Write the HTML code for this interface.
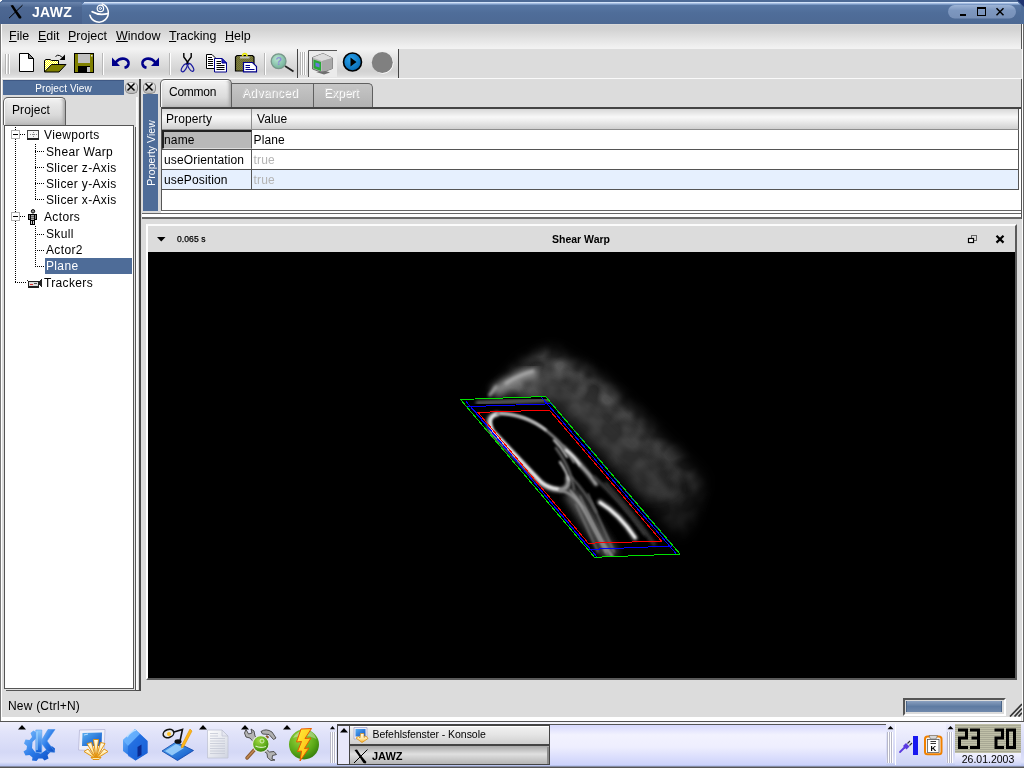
<!DOCTYPE html>
<html><head><meta charset="utf-8"><title>JAWZ</title>
<style>
*{box-sizing:border-box;margin:0;padding:0}
html,body{width:1024px;height:768px;overflow:hidden;background:#dcdcdc;font-family:"Liberation Sans",sans-serif;font-size:12px;color:#000}
.abs{position:absolute}
body{-webkit-font-smoothing:antialiased}
#root{position:absolute;left:0;top:0;width:1024px;height:768px;will-change:transform}
#titletxt{left:32px;top:4px;font-weight:bold;font-size:14px;color:#fff;letter-spacing:0.3px}
#menubar{left:2px;top:24px;width:1019px;height:25px;background:linear-gradient(#e2e2e2 0,#d2d2d2 1px,#d4d4d4 6px,#f2f2f2 24px)}
.mi{position:absolute;top:5px;font-size:12.5px;line-height:14px}
.mi u{text-decoration:underline}
#toolbar{left:2px;top:49px;width:1020px;height:29px;background:#dcdcdc}
#tbgrad{left:2px;top:49px;width:295px;height:29px;background:linear-gradient(#f3f3f3,#e4e4e4 9px,#d2d2d2 22px,#dadada 26px,#e8e8e8)}
#tbgrad2{left:298px;top:49px;width:100px;height:29px;background:linear-gradient(#f3f3f3,#e4e4e4 9px,#d2d2d2 22px,#dadada 26px,#e8e8e8)}
#tbline{left:2px;top:78px;width:1019px;height:1px;background:#fafafa}
#pvhead{left:3px;top:80px;width:121px;height:15px;border-top:1px solid #3f5985;background:#4e6c98;color:#fff;font-size:10px;text-align:center;line-height:15px;letter-spacing:0.1px}
#ptab{left:3px;top:97px;width:63px;height:28px;border:1px solid #5e5e5e;border-bottom:none;border-radius:5px 5px 0 0;background:linear-gradient(#f4f4f4,#e8e8e8 6px,#dadada 17px,#c6c6c6 24px,#b8b8b8 27px);font-size:12px;line-height:24px;padding-left:8px;letter-spacing:0.1px;box-shadow:inset 1px 1px 1px #fff,inset -3px 0 3px -1px #a8a8a8,inset 3px 0 3px -2px #c8c8c8}
#tree{left:4px;top:125px;width:130px;height:564px;background:#fff;border:1px solid #555;box-shadow:1px 1px 0 #e4e4e4,2px 2px 0 #555}
.ti{position:absolute;font-size:12px;line-height:16px;white-space:nowrap;letter-spacing:0.35px}
#vsplit{left:136px;top:97px;width:3px;height:593px;background:linear-gradient(90deg,#fff,#f4f4f4 60%,#c8c8c8)}
#vsplit2{left:139px;top:79px;width:2px;height:612px;background:#4a4a4a}
#vsplit3{left:140px;top:79px;width:2px;height:611px;background:#f0f0f0}
#propstrip{left:143px;top:94px;width:15px;height:117px;background:#4e6c98}
#propstrip span{position:absolute;left:-26.500px;top:52px;width:68px;height:14px;line-height:14px;transform:rotate(-90deg);color:#fff;font-size:10.5px;white-space:nowrap;text-align:center;letter-spacing:0.03px}
.tab{position:absolute;font-size:12px}
#tabc{left:160px;top:79px;width:72px;height:28px;border:1px solid #5e5e5e;border-bottom:none;border-radius:5px 5px 0 0;background:linear-gradient(#f6f6f6,#eaeaea 6px,#dcdcdc 17px,#c8c8c8 24px,#bababa 27px);padding:5px 0 0 8px;z-index:2;box-shadow:inset 1px 1px 1px #fff,inset -3px 0 3px -1px #a8a8a8,inset 3px 0 3px -2px #c8c8c8;letter-spacing:-0.25px}
#taba{left:232px;top:83px;width:82px;height:24px;border:1px solid #606060;border-left:none;border-bottom:none;letter-spacing:0.35px;background:linear-gradient(#c6c6c6,#b2b2b2);padding:2px 0 0 10px;color:#cdcdcd;text-shadow:1px 1px 0 #fff}
#tabe{left:313px;top:83px;width:60px;height:24px;border:1px solid #606060;border-bottom:none;border-top-right-radius:5px;background:linear-gradient(#c6c6c6,#b2b2b2);padding:2px 0 0 10px;color:#cdcdcd;text-shadow:1px 1px 0 #fff}
#table{left:161px;top:107px;width:860px;height:104px;background:#fff;border:1px solid #555;border-top:2px solid #444;border-right:none;border-bottom-color:#666;box-shadow:0 2px 0 #fff}
.th{position:absolute;top:0;height:21px;background:linear-gradient(#d8d8d8,#f8f8f8 40%,#f0f0f0 55%,#d0d0d0);border-right:1px solid #8c8c8c;border-bottom:1px solid #8c8c8c;line-height:20px;font-size:12px;padding-left:5px;letter-spacing:0.1px}
.tr{position:absolute;left:0;width:857px;border-right:1px solid #555;height:20px;border-bottom:1px solid #555;font-size:12px;line-height:20px;letter-spacing:0.15px}
.tr .c1{position:absolute;left:0;top:0;width:90px;height:19px;border-right:1px solid #555;padding-left:2px}
.tr .c2{position:absolute;left:91.5px;top:0}
#hsplit{left:142px;top:213px;width:880px;height:6px;border-top:1px solid #666;border-bottom:2px solid #666;border-bottom-color:#6a6a6a;background:#fff}
#vp{left:146px;top:224px;width:871px;height:456px;border:2px solid #fff;border-top-color:#fbfbfb;border-right-color:#5a5a5a;border-bottom-color:#5a5a5a}
#vpblack{left:148px;top:252px;width:867px;height:426px;background:#000}
#status{left:8px;top:699px;font-size:12px;line-height:14px;letter-spacing:0.2px}
#prog{left:903px;top:698px;width:103px;height:18px;border:2px solid #555;border-right:2px solid #fff;border-bottom:2px solid #fff;background:#dcdcdc;padding:1px 2px 2px 1px}
#prog div{width:100%;height:100%;background:linear-gradient(#8aa0c0,#5e7ba2 50%,#6f88ab);box-shadow:inset 1px 0 0 #4a6588,inset -1px 0 0 #4a6588}
#taskbar{left:0;top:722px;width:1024px;height:46px;background:linear-gradient(#eeeefc,#e2e4fa 10px,#d4d8f6 30px,#dfe2fa 40px,#b4c0ee 44px,#555 45px)}
.xbtn{position:absolute;width:13px;height:12px;margin-top:1px;border-radius:5px;background:linear-gradient(#f4f4f4,#b8b8b8);border:1px solid #8a8a8a;border-top-color:#aaa}
</style></head>
<body>
<div id="root">
<div class="abs" id="menubar">
 <span class="mi" style="left:7px"><u>F</u>ile</span>
 <span class="mi" style="left:36px"><u>E</u>dit</span>
 <span class="mi" style="left:66px"><u>P</u>roject</span>
 <span class="mi" style="left:114px"><u>W</u>indow</span>
 <span class="mi" style="left:167px"><u>T</u>racking</span>
 <span class="mi" style="left:223px"><u>H</u>elp</span>
</div>
<div class="abs" id="toolbar"></div>
<div class="abs" id="tbgrad"></div>
<div class="abs" id="tbgrad2"></div>
<div class="abs" id="tbline"></div>


<svg class="abs" style="left:0;top:0" width="1024" height="80" viewBox="0 0 1024 80" shape-rendering="auto">
 <defs>
  <linearGradient id="gtab" x1="0" y1="0" x2="0" y2="1"><stop offset="0" stop-color="#6b85ad"/><stop offset="0.25" stop-color="#4d6893"/><stop offset="1" stop-color="#47618c"/></linearGradient>
  <linearGradient id="gtitle" x1="0" y1="0" x2="0" y2="1"><stop offset="0" stop-color="#5b7aa8"/><stop offset="0.5" stop-color="#4f6d99"/><stop offset="1" stop-color="#4d6994"/></linearGradient>
  <linearGradient id="gpill" x1="0" y1="0" x2="0" y2="1"><stop offset="0" stop-color="#9db4d6"/><stop offset="0.4" stop-color="#7d97bf"/><stop offset="1" stop-color="#7790b8"/></linearGradient>
  <radialGradient id="gplay" cx="0.4" cy="0.35" r="0.7"><stop offset="0" stop-color="#2aa4ee"/><stop offset="1" stop-color="#0566b0"/></radialGradient>
  <radialGradient id="gmag" cx="0.4" cy="0.35" r="0.7"><stop offset="0" stop-color="#b8e6d0"/><stop offset="1" stop-color="#6fae96"/></radialGradient>
  <pattern id="dith" width="2" height="2" patternUnits="userSpaceOnUse"><rect width="2" height="2" fill="#ffff00"/><rect width="1" height="1" fill="#fff"/><rect x="1" y="1" width="1" height="1" fill="#fff"/></pattern>
  <pattern id="dith2" width="2" height="2" patternUnits="userSpaceOnUse"><rect width="2" height="2" fill="#808040"/><rect width="1" height="1" fill="#6c6c30"/><rect x="1" y="1" width="1" height="1" fill="#6c6c30"/></pattern>
 </defs>
 <!-- title bar -->
 <rect x="0" y="0" width="1024" height="24" fill="#4f6d99"/>
 <rect x="0" y="0" width="1024" height="2" fill="#4d6a96"/>
 <rect x="82" y="2" width="939" height="22" fill="url(#gtitle)"/>
 <rect x="84" y="2" width="934" height="1" fill="#d2e2f8"/><rect x="83" y="3" width="936" height="1" fill="#a4bce0"/><rect x="82" y="4" width="938" height="1" fill="#7a98c4"/>
 <path d="M0 24V5Q0 2 3 2H80Q82 2 82 4V24Z" fill="url(#gtab)"/>
 <rect x="0" y="0" width="2" height="1" fill="#fff"/><rect x="0" y="1" width="1" height="1" fill="#dfe6f0"/>
 <path d="M1017 0H1024V7Z" fill="#1f3470"/>
 <!-- X logo -->
 <path d="M10.5 5.5L13 5L17 11L21.5 17L21 18.5L19 18.5L15 12.5Z" fill="#000"/>
 <path d="M22.5 5.2L9 18.2" stroke="#000" stroke-width="1" fill="none"/>
 <!-- swirl logo -->
 <g fill="none" stroke="#fff" stroke-linecap="round">
  <path d="M102.200 3.900A9.400 9.400 0 1 1 89.900 15.300" stroke-width="1.500"/>
  <path d="M92.200 11.800Q99 15.800 107.800 13.600" stroke-width="1.900"/>
  <circle cx="100.400" cy="8.400" r="3.200" stroke-width="1.200"/>
  <circle cx="100.400" cy="8.400" r="1.100" stroke-width="0.900"/>
 </g>
 <!-- window buttons -->
 <rect x="948" y="5" width="68" height="13.5" rx="6.7" fill="url(#gpill)"/>
 <rect x="960" y="14" width="6" height="2" fill="#000"/>
 <rect x="977.5" y="7.5" width="8" height="8" fill="none" stroke="#000" stroke-width="1"/><rect x="977" y="7" width="9" height="2" fill="#000"/>
 <path d="M996.5 8.3L1003.5 15.2M1003.5 8.3L996.5 15.2" stroke="#000" stroke-width="1.5"/>
 <!-- toolbar handles -->
 <g shape-rendering="crispEdges">
  <rect x="5" y="54" width="1" height="20" fill="#b4b4b4"/><rect x="6" y="54" width="1" height="20" fill="#fff"/>
  <rect x="8" y="54" width="1" height="20" fill="#b4b4b4"/><rect x="9" y="54" width="1" height="20" fill="#fff"/>
  <rect x="102" y="53" width="1" height="22" fill="#b8b8b8"/><rect x="103" y="53" width="1" height="22" fill="#fff"/>
  <rect x="169" y="53" width="1" height="22" fill="#b8b8b8"/><rect x="170" y="53" width="1" height="22" fill="#fff"/>
  <rect x="264" y="53" width="1" height="22" fill="#b8b8b8"/><rect x="265" y="53" width="1" height="22" fill="#fff"/>
  <rect x="297" y="49" width="1" height="29" fill="#444"/>
  <rect x="398" y="49" width="1" height="29" fill="#444"/>
  <rect x="300" y="52" width="1" height="23" fill="#b4b4b4"/><rect x="301" y="52" width="1" height="23" fill="#fff"/>
  <rect x="302" y="52" width="1" height="23" fill="#b4b4b4"/><rect x="303" y="52" width="1" height="23" fill="#fff"/>
  <rect x="304" y="52" width="1" height="23" fill="#b4b4b4"/><rect x="305" y="52" width="1" height="23" fill="#fff"/>
 </g>
 <!-- new -->
 <path d="M19.5 53.5H28.5L33.5 58.5V71.5H19.5Z" fill="#fff" stroke="#000" stroke-width="1"/>
 <path d="M28.5 53.5V58.5H33.5Z" fill="#808080" stroke="#000" stroke-width="1" stroke-linejoin="round"/>
 <!-- open -->
 <path d="M44.5 72V60.5L46 59.5H50L51.5 60.5H58.5V64.5" fill="url(#dith)" stroke="#000" stroke-width="1"/>
 <path d="M44.5 72L51.5 64.5H66L59 72Z" fill="#808000" stroke="#000" stroke-width="1" stroke-linejoin="round"/>
 <path d="M55.5 56.5Q57.5 54.5 59.5 55.5T63 58" fill="none" stroke="#000" stroke-width="1"/>
 <path d="M65 54.5V60H59.5Z" fill="#000"/>
 <!-- save -->
 <rect x="74.500" y="53.5" width="19" height="19" fill="#808000" stroke="#000" stroke-width="1"/>
 <rect x="78" y="54" width="12" height="9" fill="#c0c0c0"/>
 <rect x="78" y="66" width="12" height="6" fill="#000"/>
 <rect x="87" y="67" width="3" height="5" fill="#c0c0c0"/>
 <rect x="91" y="55" width="1.500" height="1.500" fill="#e0e0e0"/>
 <!-- undo -->
 <path d="M112 57.500V66H120Z" fill="#00008b"/>
 <path d="M115.500 62.500Q119.500 57.800 124.500 58.800Q129 60.200 128.500 64Q128 67 124.500 67.800" fill="none" stroke="#00008b" stroke-width="2.600"/>
 <!-- redo -->
 <path d="M159 57.500V66H151Z" fill="#00008b"/>
 <path d="M155.500 62.500Q151.500 57.800 146.500 58.800Q142 60.200 142.500 64Q143 67 146.500 67.800" fill="none" stroke="#00008b" stroke-width="2.600"/>
 <!-- cut -->
 <path d="M183.800 53V57L187.500 62L191.200 57V53" fill="none" stroke="#000" stroke-width="1.400"/>
 <path d="M187.500 62L186 64.500M187.500 62L189 64.500" stroke="#000" stroke-width="1.400"/>
 <ellipse cx="184.200" cy="67.800" rx="2" ry="4.400" transform="rotate(32 184.200 67.800)" fill="none" stroke="#1a1aa0" stroke-width="1.200"/>
 <ellipse cx="190.800" cy="67.400" rx="2" ry="4.400" transform="rotate(-32 190.800 67.400)" fill="none" stroke="#1a1aa0" stroke-width="1.200"/>
 <!-- copy -->
 <path d="M206.500 54.500H212L215 57.500V68.500H206.500Z" fill="#fff" stroke="#000" stroke-width="1"/>
 <path d="M208 57.500H212M208 59.500H213M208 61.500H213M208 63.500H213M208 65.500H213" stroke="#000" stroke-width="1"/>
 <path d="M214.500 58.500H222L226.500 63V72H214.500Z" fill="#fff" stroke="#00008b" stroke-width="1"/>
 <path d="M222 58.500V63H226.500Z" fill="#2a2ad0" stroke="#00008b" stroke-width="1"/>
 <path d="M216.500 61.500H221M216.500 63.500H221M216.500 65.500H224.500M216.500 67.500H224.500M216.500 69.500H224.500" stroke="#000" stroke-width="1"/>
 <!-- paste -->
 <path d="M235.500 71V57L237 55.500H252.500L254 57V71Z" fill="url(#dith2)" stroke="#000" stroke-width="1.200"/>
 <path d="M242.500 56.500Q242.500 53.500 244.800 53.500Q247 53.500 247 56.500" fill="none" stroke="#e8e800" stroke-width="1.600"/>
 <rect x="240" y="56.500" width="9.500" height="2" fill="#c0c0c0"/>
 <path d="M243.500 62.500H252.500L256.500 66.500V71.800H243.500Z" fill="#fff" stroke="#00008b" stroke-width="1.200"/>
 <path d="M245.500 65.500H250M245.500 67.500H250M245.500 69.500H254.500" stroke="#00008b" stroke-width="1"/>
 <!-- find -->
 <path d="M285 66L293.500 71.500" stroke="#222" stroke-width="1.800"/>
 <circle cx="278.600" cy="61.200" r="7.400" fill="url(#gmag)" stroke="#78968a" stroke-width="1.300"/>
 <text x="275.500" y="65" font-family="Liberation Sans,sans-serif" font-size="11" font-weight="bold" fill="#8f8fd8">?</text>
 <!-- monitor button -->
 <rect x="308" y="50" width="29" height="27" fill="#ebebeb"/>
 <path d="M308.500 77V50.500H337" fill="none" stroke="#555" stroke-width="1"/>
 <path d="M312.500 57.500L323 53.500L332.500 58V68.500L322 72.500L312.500 69Z" fill="#b8b8b8" stroke="#555" stroke-width="0.800"/>
 <path d="M312.500 57.500L323 53.500L332.500 58L322 61Z" fill="#dcdcdc"/>
 <path d="M322 61L332.500 58V68.500L322 72.500Z" fill="#a8a8a8"/>
 <path d="M313.500 59.500L321 62V71L313.500 68.200Z" fill="#28a838"/>
 <path d="M315.500 62.500L319.500 63.800V67.500L315.500 66.200Z" fill="#6878e0"/>
 <path d="M316 72L324 74.500L330 72.500L326 71Z" fill="#707070"/>
 <!-- play -->
 <circle cx="352.500" cy="62" r="9" fill="url(#gplay)" stroke="#000" stroke-width="1.600"/>
 <path d="M350.500 57.500L356.500 62L350.500 66.500Z" fill="#000"/>
 <!-- stop -->
 <circle cx="383" cy="63.200" r="10.500" fill="#fff"/>
 <circle cx="382.300" cy="62.500" r="10.500" fill="#808080"/>
</svg>

<div class="abs" id="titletxt">JAWZ</div>
<div class="abs" id="pvhead">Project View</div>
<div class="xbtn" style="left:125px;top:81px"></div>
<div class="xbtn" style="left:143px;top:81px"></div>
<svg class="abs" style="left:120px;top:78px" width="44" height="20" viewBox="120 78 44 20"><path d="M127.500 83.500L134.500 90.500M134.500 83.500L127.500 90.500M145.500 83.500L152.500 90.500M152.500 83.500L145.500 90.500" stroke="#000" stroke-width="1.500" fill="none"/></svg>
<div class="abs" id="ptab">Project</div>
<div class="abs" id="tree"></div>
<div class="abs" style="left:45px;top:258px;width:87px;height:16px;background:#4e6c98"></div>
<div class="ti" style="left:44px;top:127px">Viewports</div>
<div class="ti" style="left:46px;top:144px">Shear Warp</div>
<div class="ti" style="left:46px;top:160px">Slicer z-Axis</div>
<div class="ti" style="left:46px;top:176px">Slicer y-Axis</div>
<div class="ti" style="left:46px;top:192px">Slicer x-Axis</div>
<div class="ti" style="left:44px;top:209px">Actors</div>
<div class="ti" style="left:46px;top:226px">Skull</div>
<div class="ti" style="left:46px;top:242px">Actor2</div>
<div class="ti" style="left:46px;top:258px;color:#fff">Plane</div>
<div class="ti" style="left:44px;top:275px">Trackers</div>
<svg class="abs" style="left:0;top:120px" width="140" height="180" viewBox="0 120 140 180">
 <g stroke="#000" stroke-width="1" stroke-dasharray="1 1" fill="none" shape-rendering="crispEdges">
  <path d="M15.5 127V282"/>
  <path d="M20 134.5H25"/><path d="M20 216.500H25"/>
  <path d="M35.5 144V200"/>
  <path d="M35 151.500H44M35 167.500H44M35 183.500H44M35 199.500H44"/>
  <path d="M35.5 226V267"/>
  <path d="M35 234.500H44M35 250.500H44M35 266.500H44"/>
  <path d="M15 282.500H27"/>
 </g>
 <g shape-rendering="crispEdges">
  <rect x="11.500" y="130.500" width="8" height="8" fill="#fff" stroke="#b0b0b0"/><rect x="13" y="134" width="5" height="1" fill="#000"/>
  <rect x="11.500" y="212.500" width="8" height="8" fill="#fff" stroke="#b0b0b0"/><rect x="13" y="216" width="5" height="1" fill="#000"/>
  <!-- viewport icon -->
  <rect x="27.500" y="130.500" width="11" height="8" fill="#f4f4f4" stroke="#444"/>
  <rect x="27" y="138" width="12" height="1.500" fill="#222"/>
  <path d="M30 134.500H37M33.500 132V137" stroke="#888" stroke-dasharray="1 1"/>
  <!-- actor icon -->
  <rect x="28" y="214" width="9" height="6" fill="#000"/>
  <rect x="30" y="214" width="5" height="11" fill="#000"/>
  <rect x="31" y="215" width="3" height="5" fill="#aaa"/><rect x="31" y="216" width="3" height="1" fill="#666"/><rect x="31" y="218" width="3" height="1" fill="#666"/>
  <rect x="29" y="215" width="1" height="4" fill="#888"/><rect x="35" y="215" width="1" height="4" fill="#888"/>
  <rect x="31" y="221" width="1" height="3" fill="#ccc"/><rect x="33" y="221" width="1" height="3" fill="#ccc"/><rect x="32" y="220" width="1" height="5" fill="#000"/>
  <!-- tracker icon -->
  <rect x="28.500" y="281.500" width="10" height="5" fill="#ddd" stroke="#222"/>
  <rect x="28" y="286" width="11" height="1.500" fill="#222"/>
  <rect x="30" y="284" width="3" height="1" fill="#e03030"/><rect x="34" y="283" width="3" height="1" fill="#555"/>
  <path d="M27 280L29 282M39 282L41.500 280V286L39 284.500" stroke="#222" fill="#222"/>
 </g>
 <circle cx="33" cy="211.300" r="1.700" fill="#999" stroke="#000" stroke-width="1"/>
</svg>
<div class="abs" id="vsplit"></div><div class="abs" id="vsplit2"></div><div class="abs" style="left:136px;top:690px;width:5px;height:1px;background:#4a4a4a"></div>

<div class="abs" id="propstrip"><span>Property View</span></div>
<div class="tab" id="tabc">Common</div>
<div class="tab" id="taba">Advanced</div>
<div class="tab" id="tabe">Expert</div>
<div class="abs" id="table">
 <div class="th" style="left:0;width:90px;padding-left:4px">Property</div>
 <div class="th" style="left:90px;width:767px;border-right:1px solid #555">Value</div>
 <div class="tr" style="top:21px"><div class="c1" style="background:#b9b9b9;border:2px solid #222;border-right:1px solid #555;border-bottom:1px solid #ddd;line-height:16px;padding-left:0;height:19px">name</div><div class="c2">Plane</div></div>
 <div class="tr" style="top:41px"><div class="c1">useOrientation</div><div class="c2" style="color:#b4b4b4">true</div></div>
 <div class="tr" style="top:61px;background:#e6f0fe"><div class="c1">usePosition</div><div class="c2" style="color:#b4b4b4">true</div></div>
</div>
<div class="abs" id="hsplit"></div>
<div class="abs" id="vp"></div>
<div class="abs" id="vpblack"></div>
<svg class="abs" style="left:148px;top:252px" width="867" height="427" viewBox="148 252 867 427">
 <defs>
  <filter id="b8" x="-30%" y="-30%" width="160%" height="160%"><feGaussianBlur stdDeviation="7"/></filter>
  <filter id="b4" x="-30%" y="-30%" width="160%" height="160%"><feGaussianBlur stdDeviation="3.5"/></filter>
  <filter id="b2" x="-30%" y="-30%" width="160%" height="160%"><feGaussianBlur stdDeviation="1.6"/></filter>
  <filter id="b1" x="-30%" y="-30%" width="160%" height="160%"><feGaussianBlur stdDeviation="0.8"/></filter>
  <clipPath id="pc"><path d="M460.500 399.500L545.500 396.500L680 554L594.500 557.300Z"/></clipPath>
 </defs>
 <!-- volume cloud -->
 <linearGradient id="cg" gradientUnits="userSpaceOnUse" x1="520" y1="360" x2="695" y2="525"><stop offset="0" stop-color="#4c4c4c"/><stop offset="0.45" stop-color="#3c3c3c"/><stop offset="0.8" stop-color="#2a2a2a"/><stop offset="1" stop-color="#161616"/></linearGradient>
 <filter id="mott" x="-20%" y="-20%" width="140%" height="140%" color-interpolation-filters="sRGB">
  <feTurbulence type="fractalNoise" baseFrequency="0.05" numOctaves="2" seed="11" result="n"/>
  <feColorMatrix in="n" type="matrix" values="3 0 0 0 -1  3 0 0 0 -1  3 0 0 0 -1  0 0 0 0 1" result="a"/>
  <feGaussianBlur in="SourceGraphic" stdDeviation="7" result="bl"/>
  <feComposite in="bl" in2="a" operator="arithmetic" k1="0.700" k2="0.650" k3="0" k4="0"/>
 </filter>
 <path d="M490 398L522 364L552 350L600 378L655 430L704 480L692 520L680 536L560 400Z" fill="url(#cg)" filter="url(#mott)"/>
 <path d="M520 380L550 366L590 392L640 440L680 490L650 500Z" fill="#383838" filter="url(#b8)" opacity="0.500"/>
 <path d="M494 392Q515 377 538 372" stroke="#8a8a8a" stroke-width="10" fill="none" filter="url(#b4)"/>
 <path d="M505 384Q520 374 534 371" stroke="#aaaaaa" stroke-width="3" fill="none" filter="url(#b2)"/>
 <path d="M489 396L497 386" stroke="#a0a0a0" stroke-width="3" fill="none" filter="url(#b2)"/>
 <!-- plane interior -->
 <path d="M460.500 399.500L545.500 396.500L680 554L594.500 557.300Z" fill="#000"/>
 <g clip-path="url(#pc)" fill="none" stroke-linecap="round">
  <path d="M478 403L548 400" stroke="#555" stroke-width="5" filter="url(#b2)"/>
  <!-- cranium outline -->
  <path d="M497 414Q484 417 492 432L540 482Q548 489 560 490Q570 489 568 478" stroke="#9a9a9a" stroke-width="5" filter="url(#b2)"/>
  <path d="M497 414Q486 417 493 431L541 482Q548 488 558 489" stroke="#f4f4f4" stroke-width="2.600" filter="url(#b1)"/>
  <path d="M497 414Q525 414 548 432Q566 446 574 462" stroke="#8c8c8c" stroke-width="2.400" filter="url(#b1)"/>
  <path d="M500 413Q526 414 546 430" stroke="#ddd" stroke-width="1.800" filter="url(#b1)"/>
  <path d="M554 440Q562 448 567 457" stroke="#d8d8d8" stroke-width="2" filter="url(#b1)"/>
  <!-- streak A -->
  <path d="M564 448Q580 462 596 484" stroke="#777" stroke-width="4.500" filter="url(#b2)"/>
  <path d="M566 450Q574 456 580 465" stroke="#f0f0f0" stroke-width="2.400" filter="url(#b1)"/>
  <path d="M580 465Q590 474 596 484" stroke="#aaa" stroke-width="2" filter="url(#b1)"/>
  <path d="M560 462Q566 470 569 480" stroke="#c8c8c8" stroke-width="2.200" filter="url(#b1)"/>
  <path d="M556 448Q572 470 574 490" stroke="#666" stroke-width="2.400" filter="url(#b1)"/>
  <!-- fibrous band -->
  <path d="M570 492L612 556" stroke="#505050" stroke-width="15" filter="url(#b4)" stroke-linecap="butt"/>
  <path d="M560 490Q578 494 590 520Q600 540 612 556" stroke="#8a8a8a" stroke-width="3" filter="url(#b1)"/>
  <path d="M570 490Q588 512 606 552" stroke="#9a9a9a" stroke-width="2" filter="url(#b1)"/>
  <path d="M580 496L602 544M588 494L614 552M576 504L598 552M584 508L608 556" stroke="#7c7c7c" stroke-width="1.600" filter="url(#b1)"/>
  <path d="M572 478Q584 490 596 512" stroke="#5c5c5c" stroke-width="2.400" filter="url(#b1)"/>
  <!-- streak B -->
  <path d="M600 502Q620 514 635 538" stroke="#888" stroke-width="6" filter="url(#b2)" opacity="0.700"/>
  <path d="M600 502.500Q619 514 635 537.500" stroke="#ffffff" stroke-width="3" filter="url(#b1)"/>
  <!-- dark gray lines -->
  <path d="M594 477Q620 500 645 534" stroke="#4a4a4a" stroke-width="3" filter="url(#b2)"/>
  <path d="M606 484Q630 510 654 544" stroke="#333" stroke-width="4" filter="url(#b2)"/>
 </g>
 <!-- outlines -->
 <g fill="none" stroke-width="1" shape-rendering="crispEdges">
  <path d="M465.500 400.700L597 557M466 406.700L471 406.500" stroke="#0000ff"/>
  <path d="M541.600 397.400L676 553.500" stroke="#0000ff"/>
  <path d="M471 406.500L551.500 403.800L672.500 546L590 549.400Z" stroke="#0000ff"/>
  <path d="M478 412.400L549.400 410.100L661.500 541.200L588.300 543.200Z" stroke="#ff0000"/>
  <path d="M460.500 399.500L545.500 396.500L680 554L594.500 557.300Z" stroke="#00e000"/>
 </g>
</svg>
<svg class="abs" style="left:147px;top:226px" width="870" height="26" viewBox="147 226 870 26">
 <path d="M157 237H165.500L161.250 241.500Z" fill="#000"/>
 <rect x="971.500" y="235.500" width="5" height="5" fill="#dcdcdc" stroke="#666" stroke-width="1"/>
 <rect x="968.500" y="238.500" width="5" height="4" fill="#fff" stroke="#000" stroke-width="1.200"/>
 <path d="M996.500 235.800L1003.500 242.600M1003.500 235.800L996.500 242.600" stroke="#000" stroke-width="2.200"/>
</svg>
<div class="abs" style="left:177px;top:234px;font-size:8.5px;line-height:10px;letter-spacing:0.1px;-webkit-text-stroke:0.25px #000">0.065 s</div>
<div class="abs" style="left:481px;top:232px;width:200px;text-align:center;font-size:10.5px;font-weight:bold;line-height:14px">Shear Warp</div>
<div class="abs" id="status">New (Ctrl+N)</div>
<div class="abs" id="prog"><div></div></div>
<div class="abs" style="left:0;top:24px;width:1px;height:698px;background:#777"></div>
<div class="abs" style="left:1px;top:24px;width:1px;height:697px;background:#fff"></div>
<div class="abs" style="left:1021px;top:24px;width:1px;height:25px;background:#555"></div>
<div class="abs" style="left:1021px;top:79px;width:1px;height:140px;background:#555"></div>
<div class="abs" style="left:1022px;top:24px;width:1px;height:698px;background:#fff"></div>
<div class="abs" style="left:1023px;top:24px;width:1px;height:698px;background:#666"></div>
<div class="abs" style="left:2px;top:717px;width:1019px;height:4px;background:#fff"></div>
<div class="abs" style="left:0;top:721px;width:1024px;height:1px;background:#555"></div>
<svg class="abs" style="left:1008px;top:702px" width="14" height="15" viewBox="1008 702 14 15"><path d="M1010 716.500L1022 704M1014.500 716.500L1022 708.500M1018.500 716.500L1022 712.800" stroke="#333" stroke-width="1.700"/></svg>
<div class="abs" id="taskbar"></div>
<svg class="abs" style="left:0;top:722px" width="1024" height="46" viewBox="0 722 1024 46">
 <defs>
  <linearGradient id="kb" x1="0" y1="0" x2="1" y2="1"><stop offset="0" stop-color="#7ec0ff"/><stop offset="0.5" stop-color="#2a7ae8"/><stop offset="1" stop-color="#0a48c0"/></linearGradient>
  <linearGradient id="kb2" x1="0" y1="0" x2="0" y2="1"><stop offset="0" stop-color="#8ccaff"/><stop offset="1" stop-color="#1060d8"/></linearGradient>
  <linearGradient id="scr" x1="0" y1="0" x2="1" y2="1"><stop offset="0" stop-color="#5ab0f0"/><stop offset="1" stop-color="#0a50c8"/></linearGradient>
  <linearGradient id="shell" x1="0" y1="0" x2="0" y2="1"><stop offset="0" stop-color="#fffdf0"/><stop offset="0.6" stop-color="#ffe49a"/><stop offset="1" stop-color="#f8b030"/></linearGradient>
  <radialGradient id="grn" cx="0.4" cy="0.3" r="0.8"><stop offset="0" stop-color="#a0d840"/><stop offset="0.6" stop-color="#5aa818"/><stop offset="1" stop-color="#2a7008"/></radialGradient>
  <linearGradient id="bolt" x1="0" y1="0" x2="1" y2="1"><stop offset="0" stop-color="#fff040"/><stop offset="1" stop-color="#ffb000"/></linearGradient>
  <linearGradient id="doc" x1="0" y1="0" x2="1" y2="1"><stop offset="0" stop-color="#ffffff"/><stop offset="1" stop-color="#d0d4e0"/></linearGradient>
  <linearGradient id="btn1" x1="0" y1="0" x2="0" y2="1"><stop offset="0" stop-color="#f2f2f2"/><stop offset="0.5" stop-color="#e4e4e4"/><stop offset="1" stop-color="#cfcfcf"/></linearGradient>
  <linearGradient id="btn2" x1="0" y1="0" x2="0" y2="1"><stop offset="0" stop-color="#a8a8a8"/><stop offset="0.45" stop-color="#e0e0e0"/><stop offset="1" stop-color="#b4b4b4"/></linearGradient>
  <linearGradient id="trayg" x1="0" y1="0" x2="0" y2="1"><stop offset="0" stop-color="#f2f2fe"/><stop offset="0.6" stop-color="#e0e2fa"/><stop offset="1" stop-color="#cdd4f6"/></linearGradient>
  <linearGradient id="panelg" x1="0" y1="0" x2="0" y2="1"><stop offset="0" stop-color="#d6d8fc"/><stop offset="0.25" stop-color="#f2f2fe"/><stop offset="0.55" stop-color="#eeeefe"/><stop offset="1" stop-color="#ccd2fb"/></linearGradient>
  <pattern id="lcd" width="4" height="2" patternUnits="userSpaceOnUse"><rect width="4" height="2" fill="#c0c0a8"/><rect y="1" width="4" height="1" fill="#a8a894"/></pattern>
  <filter id="tb1" x="-20%" y="-20%" width="140%" height="140%"><feGaussianBlur stdDeviation="0.6"/></filter>
 </defs>
 <!-- small triangles -->
 <g fill="#000">
  <path d="M18 729.500L22 725L26 729.500Z"/><path d="M199 729.500L203 725L207 729.500Z"/><path d="M241 729.500L245 725L249 729.500Z"/><path d="M283 729.500L287 725L291 729.500Z"/>
  <path d="M330 729.200L332.500 726L335 729.200Z"/><path d="M887.500 729.200L890.500 726L893.500 729.200Z"/><path d="M947.500 729.200L950.500 726L953.500 729.200Z"/>
 </g>
 <!-- K menu -->
 <g>
  <path d="M37 733L33.500 730.500L30.500 733L32 737L29.500 740L25.500 739.500L24 743.500L27 746L26.500 749.500L23.500 751.500L25.500 755.500L29.500 755L32.500 757.500L32 760.500L36.500 761L38.500 758.500L42.500 758.500L44.500 760.500L48.500 758.500L47.500 755L50.500 752L54.500 752.500L55 748.500L52.500 746.500L47 746L46 750L41 753.500L35.500 752.500L32 748L32.500 742L36 738.500L37 738Z" fill="url(#kb)" filter="url(#tb1)"/>
  <path d="M35.800 730H41.800V752.500H35.800Z" fill="url(#kb2)" stroke="#5aa0f0" stroke-width="0.600"/>
  <path d="M41.800 740L48 729.500H55L47 741L55 752H48L41.800 743.500Z" fill="url(#kb)" stroke="#4a90e8" stroke-width="0.600"/>
  <path d="M37 731.500V750" stroke="#b0dcff" stroke-width="1.200" opacity="0.800"/>
 </g>
 <!-- konsole -->
 <g>
  <path d="M79.500 730L105 729.500L104 751L78.500 750Z" fill="#f0f0fa" stroke="#b8b8d8" stroke-width="0.800"/>
  <path d="M82.500 733L102 732.500L101.500 746L82 746Z" fill="url(#scr)"/>
  <path d="M84 735L88 734" stroke="#bfe0ff" stroke-width="1"/>
  <g stroke="#e08c00" stroke-width="0.900" fill="url(#shell)" stroke-linejoin="round">
   <path d="M96 759L84 751.500L88 749Z"/><path d="M96 759L87 743.500L91.500 742.500Z"/><path d="M96 759L93.500 739.500H98.500Z"/><path d="M96 759L100.500 742.500L105 743.500Z"/><path d="M96 759L104 749L108 751.500Z"/>
   <path d="M91 757.500H101L99 759.500H93Z"/>
  </g>
 </g>
 <!-- home -->
 <g>
  <path d="M123 740L135 729L147.500 741V753L135.500 760.500L123 751Z" fill="url(#kb)"/>
  <path d="M123 740L135 729L140 734L128 746Z" fill="#6ab4ff" opacity="0.800"/>
  <path d="M128 746L140 734L147.500 741V753L135.500 760.500L128 756Z" fill="#1c66dc" opacity="0.700"/>
  <path d="M137.500 757V747L141.500 744.500V755Z" fill="#0a2a90"/>
  <path d="M127 737Q131 731 136 730" stroke="#c8e6ff" stroke-width="1.500" fill="none" opacity="0.800"/>
 </g>
 <!-- multimedia -->
 <g>
  <path d="M162 751L176 742L193.500 750.500L177.500 760.500Z" fill="url(#scr)" stroke="#0a40a8" stroke-width="0.800"/>
  <path d="M165 751L176 744L184 748L172 755.500Z" fill="#a8d8ff" opacity="0.800"/>
  <ellipse cx="168.500" cy="733.500" rx="5.500" ry="4" fill="#e8e8e8" stroke="#111" stroke-width="1.500" transform="rotate(-20 168.500 733.500)"/>
  <circle cx="169" cy="734" r="2" fill="#ffc020"/>
  <path d="M174 732L182.500 729.500L180 741" stroke="#111" stroke-width="1.600" fill="none"/>
  <ellipse cx="178" cy="741.500" rx="3.500" ry="2.300" fill="#111"/>
  <path d="M190 729L192 731L183.500 747L181.500 748L181.500 745.500Z" fill="#ffb818" stroke="#e09000" stroke-width="0.600"/>
 </g>
 <!-- document -->
 <g>
  <path d="M207.500 730H222L228 736V758H207.500Z" fill="url(#doc)" stroke="#c0c4d4" stroke-width="0.800"/>
  <path d="M222 730V736H228Z" fill="#e4e6f0" stroke="#b8bccc" stroke-width="0.600"/>
  <path d="M210 733.500H218M210 736H218M210 738.500H225M210 741H225M210 743.500H225M210 746H225M210 748.500H225M210 751H225M210 753.500H225" stroke="#c4c8d4" stroke-width="0.800"/>
 </g>
 <!-- tools -->
 <g>
  <path d="M247 758L256 748" stroke="#8a5a30" stroke-width="3.500" stroke-linecap="round"/>
  <path d="M247 758L256 748" stroke="#c08850" stroke-width="1.500" stroke-linecap="round"/>
  <path d="M264 741L268 736" stroke="#8a5a30" stroke-width="3"/>
  <path d="M261 731.500Q266 728 272 732L276 738L273.500 739.500L269 734.500L262.500 734Z" fill="#b0b0b0" stroke="#444" stroke-width="0.900"/>
  <path d="M246 729.500L248.500 734L252 733L251 729L254 731L255 736L257.500 739.500L254 742.500L250 738L246 737L244.500 733Z" fill="#b4b4b4" stroke="#444" stroke-width="0.900"/>
  <path d="M265.500 748.500L269.500 752L274 751.500L276.500 754.500L272.500 755.500L272 759L275 760L271 760.500L267.500 757.500L267 753.500L263 750.500Z" fill="#b4b4b4" stroke="#444" stroke-width="0.900"/>
  <circle cx="260.800" cy="744" r="8.300" fill="url(#grn)" stroke="#e8e8e8" stroke-width="1.200"/>
  <path d="M255.500 746Q260 748.500 266 746.500" stroke="#d8f0c0" stroke-width="1.200" fill="none"/>
  <circle cx="262" cy="741" r="2" fill="none" stroke="#d8f0c0" stroke-width="0.900"/>
 </g>
 <!-- lightning -->
 <g>
  <circle cx="304" cy="744.500" r="15" fill="url(#grn)"/>
  <path d="M293 738Q297 730.500 306 730Q314 731 316.500 739Q305 733 293 738Z" fill="#fff" opacity="0.350"/>
  <path d="M301 729L311.500 728.500L305 738.500L311 738L304.500 748.500L309 748L300 761L301.500 751L297.500 751.500L301.500 741.500L296.500 742Z" fill="url(#bolt)" stroke="#e85800" stroke-width="1"/>
 </g>
 <!-- handles -->
 <g shape-rendering="crispEdges">
  <rect x="330" y="722" width="700" height="44" fill="#e6e8fc" opacity="0"/>
  <rect x="330" y="732" width="1" height="31" fill="#b8b8c8"/><rect x="331" y="732" width="1" height="31" fill="#fff"/>
  <rect x="332" y="732" width="1" height="31" fill="#b8b8c8"/><rect x="333" y="732" width="1" height="31" fill="#fff"/>
  <rect x="334" y="732" width="1" height="31" fill="#b8b8c8"/><rect x="335" y="732" width="1" height="31" fill="#fff"/>
  <rect x="887" y="732" width="1" height="31" fill="#b8b8c8"/><rect x="888" y="732" width="1" height="31" fill="#fff"/>
  <rect x="889" y="732" width="1" height="31" fill="#b8b8c8"/><rect x="890" y="732" width="1" height="31" fill="#fff"/>
  <rect x="891" y="732" width="1" height="31" fill="#b8b8c8"/><rect x="892" y="732" width="1" height="31" fill="#fff"/>
  <rect x="947" y="732" width="1" height="31" fill="#b8b8c8"/><rect x="948" y="732" width="1" height="31" fill="#fff"/>
  <rect x="949" y="732" width="1" height="31" fill="#b8b8c8"/><rect x="950" y="732" width="1" height="31" fill="#fff"/>
  <rect x="951" y="732" width="1" height="31" fill="#b8b8c8"/><rect x="952" y="732" width="1" height="31" fill="#fff"/>
  <!-- task list -->
  <rect x="550" y="724" width="336" height="1" fill="#555"/>
  <rect x="550" y="725" width="336" height="40" fill="url(#panelg)"/>
  <rect x="330" y="722" width="694" height="2" fill="#f2f2fa"/>
  <rect x="337" y="724" width="213" height="41" fill="#444"/>
  <rect x="338" y="726" width="11" height="38" fill="#e8e8fa"/>
  <rect x="350" y="726" width="199" height="18" fill="url(#btn1)"/>
  <rect x="350" y="726" width="199" height="1" fill="#fff"/>
  <rect x="350" y="746" width="199" height="18" fill="url(#btn2)"/>
  <rect x="547" y="747" width="2" height="17" fill="#8c8c8c"/>
  <!-- tray -->
  <rect x="895" y="724" width="51" height="41" fill="url(#trayg)"/>
  <rect x="895" y="724" width="1" height="41" fill="#fff"/>
  <!-- clock -->
  <rect x="955" y="724" width="66" height="29" fill="url(#lcd)"/>
  <rect x="955" y="753" width="66" height="12" fill="url(#trayg)"/>
  <rect x="913" y="736" width="5" height="19" fill="#1818f0"/>
 </g>
 <path d="M340 732.500L344 728L348 732.500Z" fill="#000"/>
 <!-- konsole mini -->
 <g>
  <path d="M354 727.500H367V739H354Z" fill="#f0f0fa" stroke="#9090c0" stroke-width="0.600"/>
  <rect x="355.500" y="729" width="10" height="7.500" fill="url(#scr)"/>
  <path d="M362 742.500L356 738L358.500 736.500L360 738L360.500 733.500H364L364 737.500L366 736L368 738.500Z" fill="url(#shell)" stroke="#e08c00" stroke-width="0.700"/>
 </g>
 <!-- X mini -->
 <path d="M354.500 750L357 749.500L361 755.500L366.500 762L365.500 763.500L363.500 763L359.500 757Z" fill="#000"/>
 <path d="M367.500 749.500L354 763" stroke="#000" stroke-width="1"/>
 <!-- plug -->
 <g>
  <path d="M900 752L904.500 747.500" stroke="#5a3ae0" stroke-width="1.800" stroke-linecap="round"/>
  <path d="M903 746L906 743L909.500 746.500L906.500 749.500Z" fill="#5a3ae0"/>
  <path d="M907.500 743.500L910 741M909.500 745.500L912 743" stroke="#333" stroke-width="1.100"/>
 </g>
 <!-- klipper -->
 <g>
  <rect x="925" y="736.500" width="16.500" height="17.800" rx="2.500" fill="#f4f4f4" stroke="#f08000" stroke-width="2"/>
  <rect x="927.500" y="739.500" width="11.500" height="13" fill="#fff" stroke="#444" stroke-width="0.700"/>
  <path d="M929 735.500H937.500L936 739H930.500Z" fill="#d8d8d8" stroke="#666" stroke-width="0.600"/>
  <path d="M930.500 741.500H936M930.500 743.500H936" stroke="#222" stroke-width="0.900"/>
 </g>
 <!-- clock digits -->
 <g fill="none" stroke="#000" stroke-width="3" stroke-linejoin="miter" stroke-linecap="square">
  <path d="M959.500 730H966.500V738H959.500V747.500H966.500"/>
  <path d="M971.500 730H978.500V747.500H971.500M973 738H978.500"/>
  <path d="M996 730H1002.500V738H996V747.500H1002.500"/>
  <path d="M1007.500 730H1014.500V747.500H1007.500Z"/>
 </g>
</svg>
<div class="abs" style="left:372.500px;top:727px;font-size:10.5px;line-height:14px;letter-spacing:-0.05px;white-space:nowrap">Befehlsfenster - Konsole</div>
<div class="abs" style="left:372px;top:749px;font-size:11px;font-weight:bold;line-height:14px;white-space:nowrap">JAWZ</div>
<div class="abs" style="left:930.500px;top:743.500px;font-size:8px;line-height:9px;font-weight:bold">K</div>
<div class="abs" style="left:955px;top:753px;width:66px;text-align:center;font-size:10.5px;line-height:13px;white-space:nowrap">26.01.2003</div>
</div>
</body></html>
